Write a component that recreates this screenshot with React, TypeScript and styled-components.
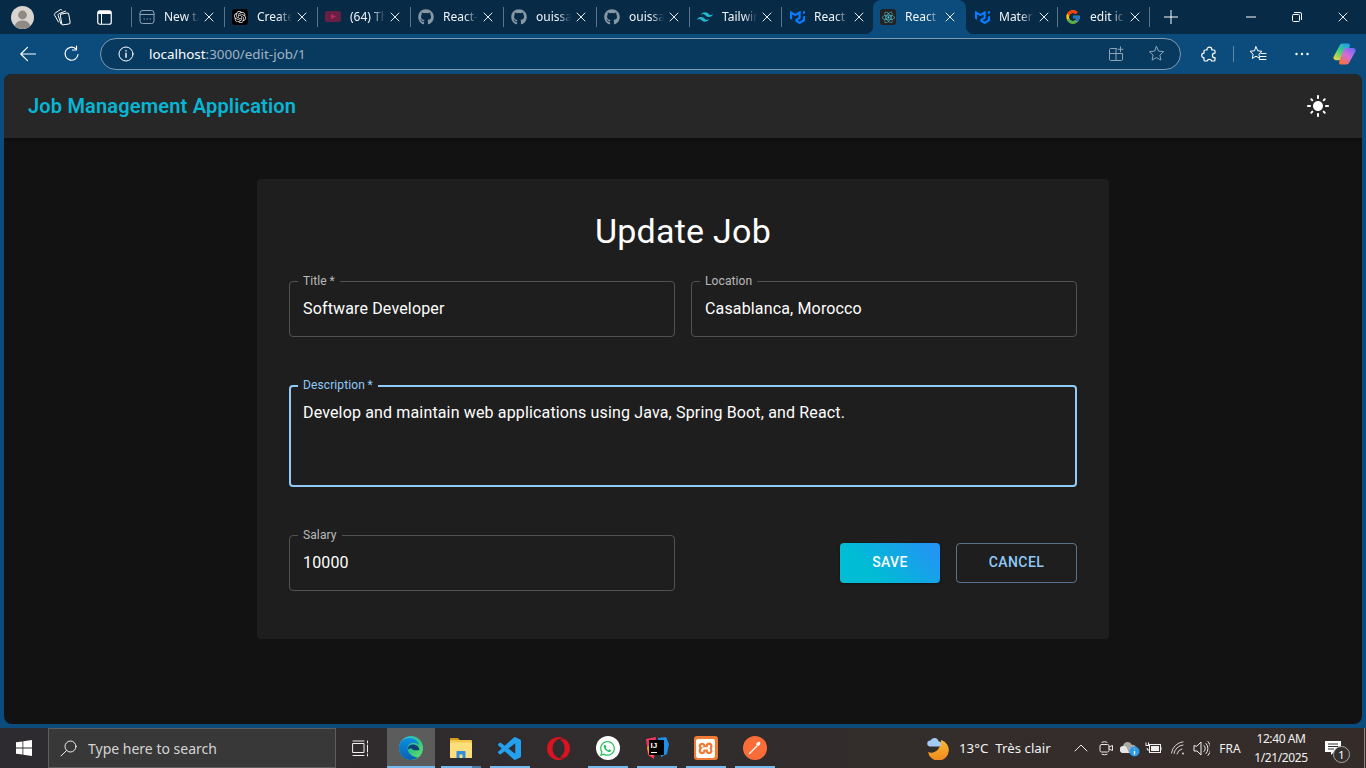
import React from 'react';
import styled, { createGlobalStyle } from 'styled-components';
import { FaGithub, FaReact, FaWhatsapp } from 'react-icons/fa';
import { FcGoogle } from 'react-icons/fc';
import { MdLightMode } from 'react-icons/md';
import { SiMui, SiOpenai, SiOpera, SiTailwindcss, SiXampp } from 'react-icons/si';

const STRIP = '#072a47';
const TOOLBAR = '#0b4c7c';
const UI_FONT = '"Noto Sans", "Open Sans", sans-serif';

const GlobalStyle = createGlobalStyle`
  html, body {
    margin: 0;
    padding: 0;
    height: 100%;
    overflow: hidden;
    background: ${TOOLBAR};
  }
  * { box-sizing: border-box; }
`;

const Screen = styled.div`
  width: 1366px;
  height: 768px;
  display: flex;
  flex-direction: column;
  font-family: ${UI_FONT};
  color: #fff;
`;

/* ---- browser chrome ---- */

const TabStrip = styled.div`
  height: 34px;
  flex: none;
  display: flex;
  align-items: center;
  background: ${STRIP};
`;

const Slot = styled.div<{ $w: number }>`
  width: ${(p) => p.$w}px;
  height: 100%;
  flex: none;
  display: flex;
  align-items: center;
  justify-content: center;
`;

const TabsStart = styled.div`
  width: 3px;
  flex: none;
`;

const Tab = styled.div<{ $w: number; $active?: boolean; $sep?: boolean }>`
  position: relative;
  width: ${(p) => p.$w}px;
  height: 34px;
  flex: none;
  display: flex;
  align-items: center;
  padding-left: ${(p) => (p.$active ? 7 : 8)}px;
  background: ${(p) => (p.$active ? TOOLBAR : 'transparent')};
  border-radius: ${(p) => (p.$active ? '8px 8px 0 0' : '0')};

  ${(p) =>
    p.$sep
      ? `&::after {
    content: '';
    position: absolute;
    left: 0;
    top: 7px;
    width: 1px;
    height: 20px;
    background: #5c7487;
  }`
      : ''}

  ${(p) =>
    p.$active
      ? `&::before {
    content: '';
    position: absolute;
    left: -8px;
    right: -8px;
    bottom: 0;
    height: 8px;
    pointer-events: none;
    background:
      radial-gradient(circle at 0 0, transparent 8px, ${TOOLBAR} 8.5px) left bottom / 8px 8px no-repeat,
      radial-gradient(circle at 100% 0, transparent 8px, ${TOOLBAR} 8.5px) right bottom / 8px 8px no-repeat;
  }`
      : ''}
`;

const TabIcon = styled.div`
  width: 16px;
  height: 16px;
  flex: none;
  display: flex;
  align-items: center;
  justify-content: center;
`;

const TabTitle = styled.div`
  width: 35px;
  margin-left: 9px;
  flex: none;
  overflow: hidden;
  white-space: nowrap;
  font-size: 12px;
  line-height: 16px;
  color: #f1f5f8;
  -webkit-mask-image: linear-gradient(90deg, #000 62%, transparent 100%);
  mask-image: linear-gradient(90deg, #000 62%, transparent 100%);
`;

const TabClose = styled.div`
  width: 10px;
  height: 10px;
  margin-left: 5px;
  flex: none;
  display: flex;
`;

const SquareFavicon = styled.div<{ $bg: string }>`
  width: 16px;
  height: 16px;
  border-radius: 3px;
  background: ${(p) => p.$bg};
  display: flex;
  align-items: center;
  justify-content: center;
`;

const PlusSlot = styled(Slot)`
  position: relative;
  &::before {
    content: '';
    position: absolute;
    left: 0;
    top: 7px;
    width: 1px;
    height: 20px;
    background: #5c7487;
  }
`;

const WindowControls = styled.div`
  margin-left: auto;
  display: flex;
  height: 100%;
`;

const Toolbar = styled.div`
  height: 40px;
  flex: none;
  display: flex;
  align-items: center;
  padding-left: 6px;
  background: ${TOOLBAR};
`;

const AddressBar = styled.div`
  width: 1081px;
  height: 32px;
  margin-left: 6px;
  margin-top: -1px;
  flex: none;
  display: flex;
  align-items: center;
  padding: 0 4px 0 17px;
  border: 1px solid #7f9bb2;
  border-radius: 16px;
  background: #083a60;
`;

const Url = styled.div`
  margin-left: 15px;
  font-size: 13.4px;
  color: #a3b4c2;
`;

const UrlHost = styled.span`
  color: #fff;
`;

const AddressActions = styled.div`
  margin-left: auto;
  display: flex;
  align-items: center;
  height: 100%;
`;

const ExtensionsSlot = styled(Slot)`
  padding-left: 6px;
`;

const ToolbarDivider = styled.div`
  width: 1px;
  height: 16px;
  margin: 0 2px;
  flex: none;
  background: #5f88a8;
`;

/* ---- the page ---- */

const Page = styled.div`
  height: 650px;
  margin: 0 4px;
  flex: none;
  display: flex;
  flex-direction: column;
  overflow: hidden;
  border-radius: 8px;
  background: #121212;
  font-family: Roboto, sans-serif;
`;

const AppBar = styled.header`
  height: 64px;
  flex: none;
  display: flex;
  align-items: center;
  justify-content: space-between;
  padding: 0 32px 0 24px;
  background: #272727;
  box-shadow: 0 2px 4px rgba(0, 0, 0, 0.3);
`;

const Brand = styled.div`
  font-size: 20px;
  font-weight: 600;
  letter-spacing: 0.18px;
  color: #06b6d4;
`;

const Card = styled.form`
  width: 852px;
  margin: 41px auto 0;
  padding: 32px 32px 48px;
  display: flex;
  flex-direction: column;
  border-radius: 4px;
  background: #1e1e1e;
`;

const Heading = styled.h1`
  margin: 0 0 30px;
  font-size: 34px;
  font-weight: 400;
  line-height: 40px;
  letter-spacing: 0.25px;
  text-align: center;
  color: #fff;
`;

const Row = styled.div`
  display: grid;
  grid-template-columns: 386px 386px;
  gap: 16px;
  align-items: center;
`;

const Field = styled.div<{ $focused?: boolean }>`
  position: relative;
  display: flex;
  border: ${(p) => (p.$focused ? '2px solid #90caf9' : '1px solid #525252')};
  border-radius: 4px;
`;

const FieldLabel = styled.label<{ $focused?: boolean }>`
  position: absolute;
  top: ${(p) => (p.$focused ? -10 : -9)}px;
  left: ${(p) => (p.$focused ? 7 : 8)}px;
  padding: 0 5px;
  font-size: 12px;
  line-height: 16px;
  letter-spacing: 0.11px;
  white-space: pre;
  background: #1e1e1e;
  color: ${(p) => (p.$focused ? '#90caf9' : 'rgba(255, 255, 255, 0.7)')};
`;

const TextInput = styled.input`
  width: 100%;
  height: 54px;
  padding: 0 13px 2px;
  border: 0;
  outline: 0;
  background: transparent;
  font: 400 16px Roboto, sans-serif;
  letter-spacing: 0.15px;
  color: #fff;
`;

const TextArea = styled.textarea`
  width: 100%;
  height: 98px;
  padding: 14px 12px 0 12px;
  border: 0;
  outline: 0;
  resize: none;
  background: transparent;
  font: 400 16px/23px Roboto, sans-serif;
  letter-spacing: 0.15px;
  color: #fff;
`;

const DescriptionRow = styled.div`
  margin: 48px 0;
`;

const Actions = styled.div`
  display: flex;
  justify-content: flex-end;
  gap: 16px;
`;

const BaseButton = styled.button`
  height: 40px;
  padding: 0 0 2px;
  border-radius: 4px;
  font: 500 14px Roboto, sans-serif;
  letter-spacing: 0.4px;
  text-transform: uppercase;
`;

const SaveButton = styled(BaseButton)`
  width: 100px;
  border: 0;
  color: #fff;
  background: linear-gradient(45deg, #00bcd4 30%, #2196f3 90%);
  box-shadow: 0 1px 3px rgba(0, 0, 0, 0.4);
`;

const CancelButton = styled(BaseButton)`
  width: 121px;
  background: transparent;
  border: 1px solid rgba(144, 202, 249, 0.5);
  color: #90caf9;
`;

/* ---- windows taskbar ---- */

const Taskbar = styled.div`
  height: 40px;
  margin-top: 4px;
  flex: none;
  display: flex;
  align-items: stretch;
  background: linear-gradient(90deg, #2e2b30 0%, #322d2c 60%, #352c29 100%);
  color: #fff;
`;

const SearchBox = styled.div`
  width: 288px;
  flex: none;
  display: flex;
  align-items: center;
  padding-left: 11px;
  gap: 11px;
  background: #383838;
  border: 1px solid #5e5e5e;
`;

const SearchText = styled.span`
  font-size: 14px;
  color: #d4d4d4;
`;

const TaskViewSlot = styled(Slot)`
  margin-right: 3px;
`;

const AppSlot = styled.div<{ $active?: boolean; $running?: boolean; $stacked?: boolean }>`
  position: relative;
  width: 49px;
  flex: none;
  display: flex;
  align-items: center;
  justify-content: center;

  ${(p) => (p.$active ? 'background: #5d5c5c; width: 48px; margin-right: 1px;' : '')}

  ${(p) =>
    p.$running
      ? `&::after {
    content: '';
    position: absolute;
    bottom: 0;
    left: ${p.$active ? 0 : 5}px;
    right: ${p.$active ? 0 : 4}px;
    height: 2px;
    background: ${p.$stacked ? 'linear-gradient(90deg, #76b9ed 78%, #4a7ea6 78%)' : '#76b9ed'};
  }`
      : ''}
`;

const Tray = styled.div`
  margin-left: auto;
  display: flex;
  align-items: center;
  height: 100%;
`;

const Weather = styled.div`
  width: 118px;
  height: 100%;
  flex: none;
  display: flex;
  align-items: center;
  padding-left: 9px;
  font-size: 13.3px;
  white-space: pre;
  color: #f2f2f2;
`;

const TrayText = styled.div`
  width: 34px;
  flex: none;
  text-align: center;
  font-size: 12px;
  color: #f2f2f2;
`;

const Clock = styled.div`
  width: 68px;
  flex: none;
  text-align: center;
  font-size: 12px;
  line-height: 19px;
  letter-spacing: -0.4px;
  color: #f2f2f2;
`;

const NotifySlot = styled(Slot)`
  position: relative;
  margin-right: 13px;
`;

const NotifyBadge = styled.div`
  position: absolute;
  right: 1px;
  bottom: 5px;
  width: 17px;
  height: 17px;
  border-radius: 50%;
  border: 1px solid #a8a8a8;
  background: #34302e;
  font-size: 11px;
  line-height: 15px;
  text-align: center;
`;

const EndLine = styled.div`
  width: 1px;
  margin: 0 1px 0 0;
  flex: none;
  align-self: stretch;
  background: #8a8785;
`;

/* ---- drawn icons ---- */

const Line = ({ size = 16, color = '#fff', sw = 1, vb = 16, children }: {
  size?: number; color?: string; sw?: number; vb?: number; children: React.ReactNode;
}) => (
  <svg width={size} height={size} viewBox={`0 0 ${vb} ${vb}`} fill="none" stroke={color} strokeWidth={sw} strokeLinecap="round" strokeLinejoin="round">
    {children}
  </svg>
);

const CloseIcon = ({ size = 10 }: { size?: number }) => (
  <Line size={size} vb={10} color="#e8eef3"><path d="M1 1l8 8M9 1L1 9" /></Line>
);

const Avatar = () => (
  <svg width="23" height="23" viewBox="0 0 23 23">
    <circle cx="11.5" cy="11.5" r="11.5" fill="#d8d4cf" />
    <circle cx="11.5" cy="9" r="4.4" fill="#8f8a84" />
    <path d="M3.6 19.8c1.2-3.6 4.4-5.4 7.9-5.4s6.7 1.8 7.9 5.4A11.5 11.5 0 0 1 11.5 23a11.5 11.5 0 0 1-7.9-3.2z" fill="#8f8a84" />
  </svg>
);

const WorkspacesIcon = () => (
  <Line size={18} vb={18}>
    <rect x="8" y="5.5" width="8.500" height="11" rx="1.500" transform="rotate(-10 12 11)" />
    <path d="M8 16 5.200 7.500c-.3-.9.1-1.600.9-1.900l6.400-2.400" />
    <path d="M5.500 14 1.600 7.200c-.4-.8-.2-1.500.5-2L7 1.800c.7-.4 1.500-.2 2 .4" />
  </Line>
);

const VerticalTabsIcon = () => (
  <svg width="15" height="15" viewBox="0 0 15 15" fill="none" stroke="#fff">
    <rect x=".75" y=".75" width="13.5" height="13.5" rx="2" strokeWidth="1.2" />
    <path d="M1 2.500h13" strokeWidth="3" />
    <path d="M4.500 3v11" />
  </svg>
);

const NewTabFavicon = () => (
  <Line color="#8ea3b4">
    <rect x="1" y="1.5" width="14" height="13" rx="2.5" />
    <path d="M1 5.5h14M5 10h.5M8 10h.5M11 10h.5" />
  </Line>
);

const YoutubeFavicon = () => (
  <svg width="16" height="16" viewBox="0 0 16 16">
    <rect y="2" width="16" height="11" rx="2.5" fill="#6a1f45" />
    <path d="M6 5l5 2.5L6 10z" fill="#b52a5b" />
  </svg>
);

const BackIcon = () => (
  <Line size={18} vb={18} sw={1.2}><path d="M16.5 9H1.8M8.5 2.3 1.8 9l6.700 6.700" /></Line>
);

const RefreshIcon = () => (
  <Line size={18} vb={18} sw={1.2}>
    <path d="M15 9.500A6.500 6.500 0 1 1 12.700 3.700" />
    <path d="M13.500 1v4h-4" />
  </Line>
);

const InfoIcon = () => (
  <Line><circle cx="8" cy="8" r="7" /><path d="M8 7.200v4M8 4.600v.3" strokeWidth="1.4" /></Line>
);

const SplitAddIcon = () => (
  <Line color="#8fa5b6">
    <path d="M8.500 2.500H2.500a1 1 0 0 0-1 1v10a1 1 0 0 0 1 1h11a1 1 0 0 0 1-1V7.500H1.500M8 2.500v12M12.500 .8v5M10 3.300h5" />
  </Line>
);

const StarIcon = ({ color = '#8fa5b6' }: { color?: string }) => (
  <Line size={17} vb={17} color={color}>
    <path d="M8.500 1.500l2.100 4.600 5 .6-3.700 3.400 1 5-4.400-2.500-4.400 2.500 1-5L1.400 6.700l5-.6z" />
  </Line>
);

const ExtensionsIcon = () => (
  <Line size={17} vb={17} sw={1.2}>
    <path d="M6 3.500a2.400 2.400 0 0 1 4.800 0V4H13a1 1 0 0 1 1 1v2.100h-.3a2.300 2.300 0 0 0 0 4.600h.3V14a1 1 0 0 1-1 1h-2.300a2.400 2.400 0 0 0-4.600 0H4a1 1 0 0 1-1-1v-2.300a2.300 2.300 0 0 1 0-4.600V5a1 1 0 0 1 1-1h2z" />
  </Line>
);

const FavoritesIcon = () => (
  <Line size={18} vb={18}>
    <path d="M7 1.800l1.800 4 4.200.5-3.100 2.900.8 4.200L7 11.200l-3.700 2.200.8-4.200L1 6.300l4.200-.5zM12 8.500h5M11.500 11.500H17M10.500 14.500H17" />
  </Line>
);

const MoreIcon = () => (
  <svg width="16" height="4" viewBox="0 0 16 4" fill="#fff">
    <circle cx="2.5" cy="2" r="1.2" /><circle cx="8" cy="2" r="1.2" /><circle cx="13.5" cy="2" r="1.2" />
  </svg>
);

const CopilotIcon = () => (
  <svg width="23" height="22" viewBox="0 0 23 22">
    <defs>
      <linearGradient id="copA" x1=".8" y1="0" x2=".1" y2="1">
        <stop offset="0" stopColor="#1f9df0" /><stop offset=".5" stopColor="#45d07a" /><stop offset="1" stopColor="#f5d63d" />
      </linearGradient>
      <linearGradient id="copB" x1=".95" y1="0" x2=".3" y2="1">
        <stop offset="0" stopColor="#5d6cf2" /><stop offset=".5" stopColor="#d06be0" /><stop offset="1" stopColor="#fa7040" />
      </linearGradient>
    </defs>
    <path d="M6.500 2.800C7 1.400 8 .5 9.800 .5H15c1.700 0 2.300 1.300 1.800 2.800l-3.900 11c-.6 1.800-1.800 2.900-3.700 2.900H3c-2 0-3-1.700-2.400-3.400z" fill="url(#copA)" />
    <path d="M16.500 19c-.5 1.500-1.500 2.500-3.300 2.500H8c-1.700 0-2.300-1.300-1.800-2.800l3.900-10.700c.6-1.800 1.800-2.900 3.700-2.900h6.200c2 0 3 1.700 2.400 3.400z" fill="url(#copB)" />
  </svg>
);

const MinimizeIcon = () => <Line size={10} vb={10}><path d="M0 5h10" /></Line>;

const RestoreIcon = () => (
  <Line size={10} vb={10}>
    <rect x=".5" y="2.5" width="7" height="7" rx="1" />
    <path d="M2.500 .5h5.500a1.500 1.500 0 0 1 1.500 1.500v5.500" />
  </Line>
);

const WindowsLogo = () => (
  <svg width="16" height="16" viewBox="0 0 16 16" fill="#fff">
    <path d="M0 2.300 6.500 1.400v6.200H0zM7.300 1.300 16 0v7.600H7.300zM0 8.400h6.500v6.200L0 13.700zM7.300 8.400H16V16l-8.700-1.200z" />
  </svg>
);

const SearchGlass = () => (
  <Line size={17} vb={17} color="#f0f0f0">
    <circle cx="10.5" cy="6.5" r="5.5" /><path d="M6.500 10.500 1 16" />
  </Line>
);

const TaskViewIcon = () => (
  <Line size={17} vb={17} color="#f0f0f0">
    <rect x="1" y="3.5" width="11" height="9" /><path d="M1 1h11M1 15.500h11M15.500 1v2M15.500 5v7M15.500 14v2" />
  </Line>
);

const EdgeIcon = () => (
  <svg width="24" height="24" viewBox="0 0 24 24">
    <defs>
      <linearGradient id="edgeA" x1="0" y1="0" x2="1" y2="1">
        <stop offset="0" stopColor="#35c1f1" /><stop offset=".55" stopColor="#33c481" /><stop offset="1" stopColor="#6ee36a" />
      </linearGradient>
      <linearGradient id="edgeB" x1="0" y1="0" x2="0" y2="1">
        <stop offset="0" stopColor="#0c8fe0" /><stop offset="1" stopColor="#0a5fb0" />
      </linearGradient>
    </defs>
    <circle cx="12" cy="12" r="12" fill="url(#edgeA)" />
    <path d="M0 12C0 5.500 5 2 10 2c5.500 0 9 3 10 7-3-3-9-3-11 1-2 5 3 11 10 11.500A12 12 0 0 1 12 24C5 24 0 18.500 0 12z" fill="url(#edgeB)" />
    <path d="M9 12.500c0-3 3-4.500 6-4 3 .5 5 2.500 5.500 5.500-2 .5-6 .5-7-.5-1-1-1.500-1.500-2.500-1-1 .5-1 2-2 0z" fill="#0f3d78" />
  </svg>
);

const FolderIcon = () => (
  <svg width="22" height="20" viewBox="1 2 22 20">
    <path d="M1 3c0-.6.4-1 1-1h7l2.500 3H1z" fill="#d79a1e" />
    <rect x="1" y="4" width="22" height="18" rx="1" fill="#f2c94c" />
    <rect x="1" y="6.500" width="22" height="15.500" rx="1" fill="#fcdf7c" />
    <path d="M7.500 22v-6c0-.6.4-1 1-1h7c.6 0 1 .4 1 1v6h-3v-3.500h-3V22z" fill="#2f8fdb" />
  </svg>
);

const VsCodeIcon = () => (
  <svg width="23" height="23" viewBox="0 0 24 24" fill="#23a1ee">
    <path d="M23.15 2.587L18.21.21a1.494 1.494 0 0 0-1.705.29l-9.46 8.63-4.12-3.128a.999.999 0 0 0-1.276.057L.327 7.261A1 1 0 0 0 .326 8.74L3.899 12 .326 15.26a1 1 0 0 0 .001 1.479L1.65 17.94a.999.999 0 0 0 1.276.057l4.12-3.128 9.46 8.63a1.492 1.492 0 0 0 1.704.29l4.942-2.377A1.5 1.5 0 0 0 24 20.06V3.939a1.5 1.5 0 0 0-.85-1.352zm-5.146 14.861L10.826 12l7.178-5.448v10.896z" />
  </svg>
);

const WhatsappDisc = styled.div`
  width: 24px;
  height: 24px;
  border-radius: 50%;
  background: #fff;
  display: flex;
  align-items: center;
  justify-content: center;
`;

const IdeaWrap = styled.div`
  position: relative;
  width: 24px;
  height: 24px;
`;

const IdeaBlock = styled.div`
  position: absolute;
  left: 4px;
  top: 4px;
  width: 15px;
  height: 15px;
  padding: 1px 0 0 2px;
  background: #000;
  font: 700 8px/9px "Liberation Sans", sans-serif;
  color: #fff;
  &::after {
    content: '';
    position: absolute;
    left: 2px;
    bottom: 2px;
    width: 6px;
    height: 1px;
    background: #fff;
  }
`;

const IntellijIcon = () => (
  <IdeaWrap>
    <svg width="24" height="24" viewBox="0 0 24 24">
      <path d="M1 3l10-2-2 22-6-4z" fill="#f0355f" />
      <path d="M2 12l4-6 2 14-4-1z" fill="#f6a11c" />
      <path d="M13 2l8-1 3 7-2 10-6 3z" fill="#1e90e8" />
    </svg>
    <IdeaBlock>IJ</IdeaBlock>
  </IdeaWrap>
);

const XamppTile = styled.div`
  width: 24px;
  height: 24px;
  border-radius: 3px;
  background: #ef7b36;
  display: flex;
  align-items: center;
  justify-content: center;
`;

const PostmanIcon = () => (
  <svg width="24" height="24" viewBox="0 0 24 24">
    <circle cx="12" cy="12" r="12" fill="#fb6d38" />
    <path d="M6.500 17.500 14 10" stroke="#fff" strokeWidth="1.2" strokeLinecap="round" />
    <path d="M13 8.500c.8-2 2.600-3 3.800-2.500 1 .8.500 2.600-1.300 4z" fill="#fff" />
  </svg>
);

const WeatherIcon = () => (
  <svg width="24" height="24" viewBox="0 0 24 24">
    <defs>
      <linearGradient id="moon" x1="0" y1="0" x2="0" y2="1">
        <stop offset="0" stopColor="#f9b730" /><stop offset="1" stopColor="#ee8a1f" />
      </linearGradient>
    </defs>
    <path d="M15 4a10.500 10.500 0 1 1-13 12c6 2.500 13-2 13-12z" fill="url(#moon)" />
    <path d="M4 10.500a3 3 0 0 1 .5-6 4.200 4.200 0 0 1 8 .8 2.600 2.600 0 0 1 0 5.200z" fill="#a3cbf5" />
  </svg>
);

const ChevronUp = () => <Line size={14} vb={14} color="#f0f0f0"><path d="M1 10l6-6 6 6" /></Line>;

const MeetIcon = () => (
  <Line size={16} color="#e8e8e8">
    <rect x="2" y="4.5" width="9" height="7.5" rx="1.5" />
    <path d="M11 7l3.500-1.500v5L11 9M4 2.200a6 6 0 0 1 5 0M4 14.300a6 6 0 0 0 5 0" />
  </Line>
);

const CloudInfoIcon = () => (
  <svg width="20" height="18" viewBox="0 0 20 18">
    <path d="M3.500 14a3.500 3.500 0 0 1-.3-7 4.500 4.500 0 0 1 8.600-1.200A3.500 3.500 0 0 1 16 10v4z" fill="#a8a8a8" />
    <path d="M3.500 14a3.500 3.500 0 0 1-.3-7c1-.4 2.500 0 3.500 1.500L9 14z" fill="#e6e6e6" />
    <circle cx="14.5" cy="12.5" r="5" fill="#2b9ae8" />
    <path d="M14.500 12v3.500M14.500 9.700v.6" stroke="#fff" strokeWidth="1.3" />
  </svg>
);

const BatteryIcon = () => (
  <svg width="17" height="14" viewBox="0 0 17 14" fill="none" stroke="#f0f0f0">
    <rect x="4.5" y="3.5" width="11" height="8" />
    <rect x="6" y="5" width="8" height="5" fill="#f0f0f0" stroke="none" />
    <path d="M16 6v3M1 1.500v2.500M3.500 1.500v2.500M0.500 4.500h3.500M2.300 7v2H4.500" />
  </svg>
);

const WifiIcon = () => (
  <Line size={16} color="#d8d8d8">
    <path d="M1.500 13A13 13 0 0 1 13 1.800M4 13.500A10 10 0 0 1 13 5M7 14a6.500 6.500 0 0 1 5-5" />
    <circle cx="13" cy="13.5" r="1" fill="#d8d8d8" stroke="none" />
  </Line>
);

const SpeakerIcon = () => (
  <Line size={17} vb={17} color="#f0f0f0">
    <path d="M1 6v5h3l4 4V2L4 6zM11 5.500a4 4 0 0 1 0 6M13 3.500a7 7 0 0 1 0 10M15 1.500a10 10 0 0 1 0 14" />
  </Line>
);

const NotifyIcon = () => (
  <svg width="16" height="14" viewBox="0 0 16 14" fill="#fff">
    <path d="M0 0h16v11H9l-3 3v-3H0z" />
    <path d="M3 3h10M3 5.500h10M3 8h6" stroke="#34302e" />
  </svg>
);

/* ---- data ---- */

const tabs = [
  { title: 'New tab', w: 93, sep: true, icon: <NewTabFavicon /> },
  { title: 'Create Image', w: 93, sep: true, icon: <SquareFavicon $bg="#000"><SiOpenai size={12} color="#e5e5e5" /></SquareFavicon> },
  { title: '(64) The Best', w: 93, sep: true, icon: <YoutubeFavicon /> },
  { title: 'React-Job', w: 93, sep: true, icon: <FaGithub size={16} color="#8798a5" /> },
  { title: 'ouissal/job', w: 93, sep: true, icon: <FaGithub size={16} color="#8798a5" /> },
  { title: 'ouissal/app', w: 93, sep: true, icon: <FaGithub size={16} color="#8798a5" /> },
  { title: 'Tailwind CSS', w: 92, sep: true, icon: <SiTailwindcss size={16} color="#22b8cf" /> },
  { title: 'React Select', w: 92, sep: true, icon: <SiMui size={15} color="#0a7cff" /> },
  { title: 'React App', w: 93, active: true, icon: <SquareFavicon $bg="#222"><FaReact size={13} color="#4fc3d9" /></SquareFavicon> },
  { title: 'Material UI', w: 91, icon: <SiMui size={15} color="#0a7cff" /> },
  { title: 'edit icon', w: 92, sep: true, icon: <FcGoogle size={16} /> },
];

const apps = [
  { icon: <EdgeIcon />, active: true, running: true },
  { icon: <FolderIcon />, running: true, stacked: true },
  { icon: <VsCodeIcon />, running: true },
  { icon: <SiOpera size={23} color="#d9131f" /> },
  { icon: <WhatsappDisc><FaWhatsapp size={17} color="#25c05a" /></WhatsappDisc>, running: true },
  { icon: <IntellijIcon />, running: true },
  { icon: <XamppTile><SiXampp size={19} color="#fff" /></XamppTile>, running: true },
  { icon: <PostmanIcon />, running: true },
];

const App = () => (
  <Screen>
    <GlobalStyle />
    <TabStrip>
      <Slot $w={44}><Avatar /></Slot>
      <Slot $w={36}><WorkspacesIcon /></Slot>
      <Slot $w={48}><VerticalTabsIcon /></Slot>
      <TabsStart />
      {tabs.map((tab) => (
        <Tab key={tab.title} $w={tab.w} $active={tab.active} $sep={tab.sep}>
          <TabIcon>{tab.icon}</TabIcon>
          <TabTitle>{tab.title}</TabTitle>
          <TabClose><CloseIcon /></TabClose>
        </Tab>
      ))}
      <PlusSlot $w={44}>
        <Line size={14} vb={14}><path d="M7 0v14M0 7h14" /></Line>
      </PlusSlot>
      <WindowControls>
        <Slot $w={46}><MinimizeIcon /></Slot>
        <Slot $w={46}><RestoreIcon /></Slot>
        <Slot $w={46}><CloseIcon /></Slot>
      </WindowControls>
    </TabStrip>

    <Toolbar>
      <Slot $w={44}><BackIcon /></Slot>
      <Slot $w={44}><RefreshIcon /></Slot>
      <AddressBar>
        <InfoIcon />
        <Url><UrlHost>localhost</UrlHost>:3000/edit-job/1</Url>
        <AddressActions>
          <Slot $w={40}><SplitAddIcon /></Slot>
          <Slot $w={40}><StarIcon /></Slot>
        </AddressActions>
      </AddressBar>
      <ExtensionsSlot $w={50}><ExtensionsIcon /></ExtensionsSlot>
      <ToolbarDivider />
      <Slot $w={44}><FavoritesIcon /></Slot>
      <Slot $w={44}><MoreIcon /></Slot>
      <Slot $w={40}><CopilotIcon /></Slot>
    </Toolbar>

    <Page>
      <AppBar>
        <Brand>Job Management Application</Brand>
        <MdLightMode size={24} color="#fff" />
      </AppBar>
      <Card onSubmit={(e) => e.preventDefault()}>
        <Heading>Update Job</Heading>
        <Row>
          <Field>
            <FieldLabel>{'Title\u2009*'}</FieldLabel>
            <TextInput defaultValue="Software Developer" />
          </Field>
          <Field>
            <FieldLabel>Location</FieldLabel>
            <TextInput defaultValue="Casablanca, Morocco" />
          </Field>
        </Row>
        <DescriptionRow>
          <Field $focused>
            <FieldLabel $focused>{'Description\u2009*'}</FieldLabel>
            <TextArea defaultValue="Develop and maintain web applications using Java, Spring Boot, and React." />
          </Field>
        </DescriptionRow>
        <Row>
          <Field>
            <FieldLabel>Salary</FieldLabel>
            <TextInput defaultValue="10000" />
          </Field>
          <Actions>
            <SaveButton type="submit">Save</SaveButton>
            <CancelButton type="button">Cancel</CancelButton>
          </Actions>
        </Row>
      </Card>
    </Page>

    <Taskbar>
      <Slot $w={48}><WindowsLogo /></Slot>
      <SearchBox>
        <SearchGlass />
        <SearchText>Type here to search</SearchText>
      </SearchBox>
      <TaskViewSlot $w={48}><TaskViewIcon /></TaskViewSlot>
      {apps.map((app, i) => (
        <AppSlot key={i} $active={app.active} $running={app.running} $stacked={app.stacked}>{app.icon}</AppSlot>
      ))}
      <Tray>
        <Slot $w={24}><WeatherIcon /></Slot>
        <Weather>{'13°C  Très clair'}</Weather>
        <Slot $w={25}><ChevronUp /></Slot>
        <Slot $w={26}><MeetIcon /></Slot>
        <Slot $w={22}><CloudInfoIcon /></Slot>
        <Slot $w={25}><BatteryIcon /></Slot>
        <Slot $w={24}><WifiIcon /></Slot>
        <Slot $w={23}><SpeakerIcon /></Slot>
        <TrayText>FRA</TrayText>
        <Clock>12:40 AM<br />1/21/2025</Clock>
        <NotifySlot $w={36}>
          <NotifyIcon />
          <NotifyBadge>1</NotifyBadge>
        </NotifySlot>
        <EndLine />
      </Tray>
    </Taskbar>
  </Screen>
);

export default App;
